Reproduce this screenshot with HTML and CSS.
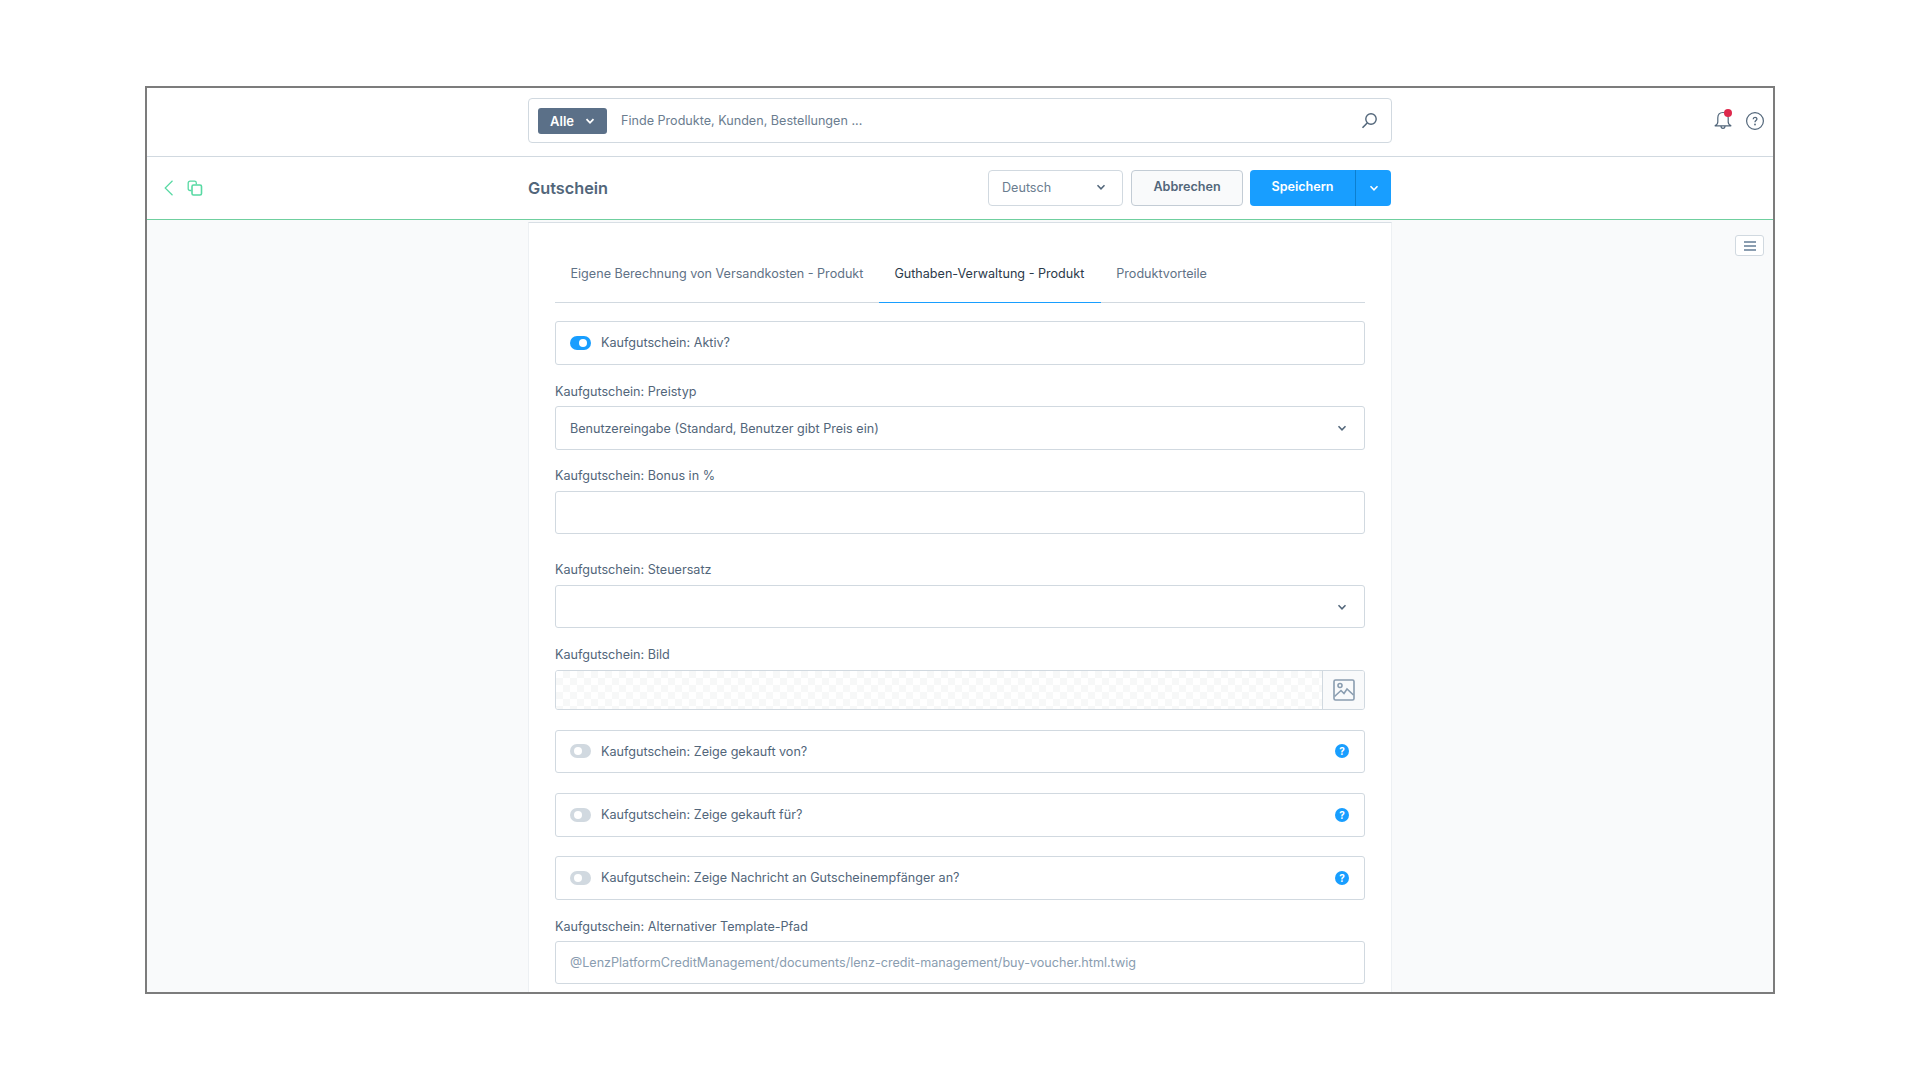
FILE: index.html
```html
<!DOCTYPE html>
<html lang="de">
<head>
    <meta charset="UTF-8">
    <title>Gutschein</title>
    <link rel="stylesheet" href="styles.css">
</head>
<body>
    <div class="frame">
        <!-- Suche -->
        <header class="topbar">
            <div></div>
            <div class="search">
                <span class="search-type">Alle
                    <svg class="chev" width="10" height="10" viewBox="0 0 10 10"><path d="M1.500 3.200 5 6.800l3.500-3.600" fill="none" stroke="#fff" stroke-width="1.800"/></svg>
                </span>
                <span class="search-text">Finde Produkte, Kunden, Bestellungen ...</span>
                <svg class="search-icon" width="17" height="17" viewBox="0 0 17 17" fill="none" stroke="#52667a" stroke-width="1.400"><circle cx="10" cy="7" r="5.200"/><path d="M6.200 11 1.500 15.700" stroke-width="1.600"/></svg>
            </div>
            <div class="top-icons">
                <span class="bell">
                    <svg width="20" height="20" viewBox="0 0 20 20" fill="none" stroke="#52667a" stroke-width="1.200"><path d="M10 1.500c-3.400 0-5.200 2.400-5.200 5.400v4c0 1.800-1.100 3-3 3.900h16.400c-1.900-.9-3-2.100-3-3.900v-4c0-3-1.800-5.400-5.200-5.400z"/><path d="M8 15c0 3.200 4 3.200 4 0"/></svg>
                    <i class="bell-dot"></i>
                </span>
                <svg width="20" height="20" viewBox="0 0 20 20" fill="none" stroke="#52667a" stroke-width="1.200"><circle cx="10" cy="10" r="8.400"/><path d="M8.200 8.200c0-2.400 3.700-2.400 3.700-.1 0 1.500-1.900 1.500-1.900 3.100" stroke-width="1.300"/><circle cx="10" cy="13.500" r=".9" fill="#52667a" stroke="none"/></svg>
            </div>
        </header>

        <!-- Aktionen -->
        <div class="actionbar">
            <div class="nav-icons">
                <svg width="10" height="16" viewBox="0 0 10 16" fill="none" stroke="#57d9a3" stroke-width="1.200"><path d="M8.500 .8 1.200 8l7.300 7.200"/></svg>
                <svg width="16" height="16" viewBox="0 0 16 16" fill="none" stroke="#57d9a3" stroke-width="1.300"><path d="M4.500 10.500H3A1.800 1.800 0 0 1 1.200 8.700V3A1.800 1.800 0 0 1 3 1.200h4.500A1.800 1.800 0 0 1 9.300 3v1.500"/><rect x="5" y="5" width="9.500" height="10" rx="1.500" stroke-width="1.600"/></svg>
            </div>
            <div class="action-main">
                <h1>Gutschein</h1>
                <div class="actions">
                    <div class="lang">Deutsch
                        <svg width="10" height="10" viewBox="0 0 10 10"><path d="M1.500 3.200 5 6.800l3.500-3.600" fill="none" stroke="#52667a" stroke-width="1.500"/></svg>
                    </div>
                    <button class="btn">Abbrechen</button>
                    <div class="save">
                        <button class="save-main">Speichern</button>
                        <button class="save-more">
                            <svg width="10" height="10" viewBox="0 0 10 10"><path d="M1.500 3.200 5 6.800l3.500-3.600" fill="none" stroke="#fff" stroke-width="1.500"/></svg>
                        </button>
                    </div>
                </div>
            </div>
            <div></div>
        </div>

        <!-- Inhalt -->
        <main class="content">
            <div></div>
            <section class="card">
                <nav class="tabs">
                    <a class="tab">Eigene Berechnung von Versandkosten - Produkt</a>
                    <a class="tab active">Guthaben-Verwaltung - Produkt</a>
                    <a class="tab">Produktvorteile</a>
                </nav>

                <div class="switch-box first">
                    <span class="toggle on"></span>
                    <span>Kaufgutschein: Aktiv?</span>
                </div>

                <label class="label label-price">Kaufgutschein: Preistyp</label>
                <div class="field select field-price">
                    <span>Benutzereingabe (Standard, Benutzer gibt Preis ein)</span>
                    <svg width="10" height="10" viewBox="0 0 10 10"><path d="M1.500 3.200 5 6.800l3.500-3.600" fill="none" stroke="#52667a" stroke-width="1.500"/></svg>
                </div>

                <label class="label label-bonus">Kaufgutschein: Bonus in %</label>
                <div class="field field-low"></div>

                <label class="label label-tax">Kaufgutschein: Steuersatz</label>
                <div class="field select field-low">
                    <span></span>
                    <svg width="10" height="10" viewBox="0 0 10 10"><path d="M1.500 3.200 5 6.800l3.500-3.600" fill="none" stroke="#52667a" stroke-width="1.500"/></svg>
                </div>

                <label class="label label-image">Kaufgutschein: Bild</label>
                <div class="image-field">
                    <div class="checker"></div>
                    <div class="image-btn">
                        <svg width="22" height="22" viewBox="0 0 22 22" fill="none" stroke="#8a9db0" stroke-width="1.600"><rect x="1" y="1" width="20" height="20" rx="1.500"/><circle cx="7" cy="6.500" r="2"/><path d="M1.500 17.500 8 11.500l3 3 3-4.500 6.500 6"/></svg>
                    </div>
                </div>

                <div class="switch-box short gap-switch">
                    <span class="toggle"></span>
                    <span>Kaufgutschein: Zeige gekauft von?</span>
                    <i class="help">?</i>
                </div>
                <div class="switch-box gap-switch">
                    <span class="toggle"></span>
                    <span>Kaufgutschein: Zeige gekauft für?</span>
                    <i class="help">?</i>
                </div>
                <div class="switch-box gap-last">
                    <span class="toggle"></span>
                    <span>Kaufgutschein: Zeige Nachricht an Gutscheinempfänger an?</span>
                    <i class="help">?</i>
                </div>

                <label class="label label-path">Kaufgutschein: Alternativer Template-Pfad</label>
                <div class="field placeholder">@LenzPlatformCreditManagement/documents/lenz-credit-management/buy-voucher.html.twig</div>
            </section>
            <div class="side">
                <span class="side-btn"><i></i><i></i><i></i></span>
            </div>
        </main>
    </div>
</body>
</html>
```

FILE: styles.css
```css
* {
    box-sizing: border-box;
}

html, body {
    margin: 0;
    background: #fff;
}

body {
    height: 1080px;
    padding: 86px 145px 0;
    font-family: Inter, "Liberation Sans", sans-serif;
    font-size: 12.6px;
    color: #52667a;
    overflow: hidden;
}

.frame {
    width: 1630px;
    height: 908px;
    border: 2px solid #7c7c7c;
    display: flex;
    flex-direction: column;
    overflow: hidden;
    background: #fff;
}

.topbar, .actionbar, .content {
    display: grid;
    grid-template-columns: 1fr 864px 1fr;
}

/* Suche */
.topbar {
    height: 69px;
    flex: none;
    align-items: start;
    border-bottom: 1px solid #d1d9e0;
}

.search {
    margin-top: 10px;
    height: 45px;
    display: flex;
    align-items: center;
    padding: 0 13px 0 9px;
    border: 1px solid #d1d9e0;
    border-radius: 4px;
}

.search-type {
    width: 69px;
    height: 26px;
    display: flex;
    align-items: center;
    justify-content: center;
    gap: 11px;
    background: #5b7088;
    border-radius: 3px;
    color: #fff;
    font-size: 13px;
    font-weight: 600;
}

.search-text {
    margin-left: 14px;
    flex: 1;
    color: #6b7d8f;
}

.top-icons {
    display: flex;
    justify-content: flex-end;
    gap: 12px;
    margin-top: 23px;
    padding-right: 8px;
}

.bell {
    position: relative;
    height: 20px;
}

.bell-dot {
    position: absolute;
    top: -2px;
    right: 1px;
    width: 8px;
    height: 8px;
    border-radius: 50%;
    background: #de294c;
}

/* Aktionen */
.actionbar {
    height: 63px;
    flex: none;
    border-bottom: 1px solid #6fcf9f;
}

.nav-icons {
    display: flex;
    align-items: center;
    gap: 13px;
    padding-left: 17px;
    height: 61px;
}

.action-main {
    display: flex;
    justify-content: space-between;
    align-items: center;
    height: 62px;
}

h1 {
    margin: 0;
    font-size: 16.3px;
    font-weight: 600;
    color: #52667a;
}

.actions {
    display: flex;
    gap: 8px;
    padding-right: 1px;
}

.lang {
    width: 135px;
    height: 36px;
    display: flex;
    align-items: center;
    justify-content: space-between;
    padding: 0 16px 2px 13px;
    border: 1px solid #d1d9e0;
    border-radius: 4px;
    color: #6b7d8f;
}

.btn, .save-main, .save-more {
    height: 36px;
    font-family: inherit;
    font-size: 12.6px;
    font-weight: 600;
    border-radius: 4px;
    padding: 0;
    padding-bottom: 3px;
}

.btn {
    width: 112px;
    margin-right: -1px;
    background: #f9fafb;
    border: 1px solid #c3ccd5;
    color: #52667a;
}

.save {
    display: flex;
}

.save-main {
    width: 105px;
    background: #189eff;
    border: 0;
    border-radius: 4px 0 0 4px;
    color: #fff;
}

.save-more {
    width: 36px;
    padding-bottom: 0;
    background: #189eff;
    border: 0;
    border-left: 1px solid #0c7fd0;
    border-radius: 0 4px 4px 0;
}

/* Inhalt */
.content {
    flex: 1;
    background: #f9fafb;
    min-height: 0;
}

.card {
    margin-top: 2px;
    padding: 0 26px;
    background: #fff;
    border: 1px solid #edf0f3;
    border-top: 1px solid #d8dfe5;
    height: 900px;
}

.tabs {
    display: flex;
    height: 80px;
    border-bottom: 1px solid #d1d9e0;
    padding-top: 30px;
}

.tab {
    padding: 13px 15.500px 0;
    height: 50px;
    color: #5f7286;
}

.tab.active {
    padding-right: 16.500px;
    color: #2b3a4a;
    border-bottom: 1px solid #189eff;
    margin-bottom: -1px;
}

.switch-box, .field, .image-field {
    border: 1px solid #d1d9e0;
    border-radius: 3px;
    background: #fff;
}

.switch-box {
    height: 44px;
    display: flex;
    align-items: center;
    gap: 10px;
    padding: 0 15px 1px 14px;
}

.switch-box.short {
    height: 43px;
}

.switch-box.first {
    margin-top: 18px;
}

.gap-switch {
    margin-top: 20px;
}

.gap-last {
    margin-top: 19px;
}

.toggle {
    position: relative;
    width: 21px;
    height: 14px;
    border-radius: 7px;
    background: #d1d9e0;
}

.toggle::after {
    content: "";
    position: absolute;
    top: 3px;
    left: 4px;
    width: 8px;
    height: 8px;
    border-radius: 50%;
    background: #fff;
}

.toggle.on {
    background: #189eff;
}

.toggle.on::after {
    left: 9px;
}

.help {
    margin-left: auto;
    width: 14px;
    height: 14px;
    border-radius: 50%;
    background: #189eff;
    color: #fff;
    font-size: 10px;
    font-weight: 700;
    font-style: normal;
    text-align: center;
    line-height: 14px;
}

.label {
    display: block;
    height: 20px;
    line-height: 20px;
    margin-bottom: 5px;
}

.label-price { margin-top: 17px; margin-bottom: 4px; }
.label-bonus { margin-top: 16px; }
.label-tax { margin-top: 26px; }
.label-image { margin-top: 17px; }
.label-path { margin-top: 17px; margin-bottom: 4px; }

.field {
    height: 43px;
    display: flex;
    align-items: center;
    padding: 0 14px;
}

.field-price {
    height: 44px;
}

.field-low {
    height: 43px;
}

.select {
    justify-content: space-between;
    padding-right: 17px;
}

.placeholder {
    color: #8a9db0;
}

.image-field {
    height: 40px;
    display: flex;
    overflow: hidden;
}

.checker {
    flex: 1;
    background: repeating-conic-gradient(#f7f8f8 0 25%, #fff 0 50%) 0 0 / 14px 14px;
}

.image-btn {
    width: 42px;
    display: flex;
    align-items: center;
    justify-content: center;
    background: #f9fafb;
    border-left: 1px solid #d1d9e0;
}

.side {
    display: flex;
    justify-content: flex-end;
    padding: 15px 9px 0 0;
}

.side-btn {
    width: 29px;
    height: 21px;
    display: flex;
    flex-direction: column;
    align-items: center;
    justify-content: center;
    gap: 2px;
    border: 1px solid #d1d9e0;
    border-radius: 3px;
    background: #fff;
}

.side-btn i {
    width: 12px;
    height: 2px;
    background: #8a9db0;
}
```
